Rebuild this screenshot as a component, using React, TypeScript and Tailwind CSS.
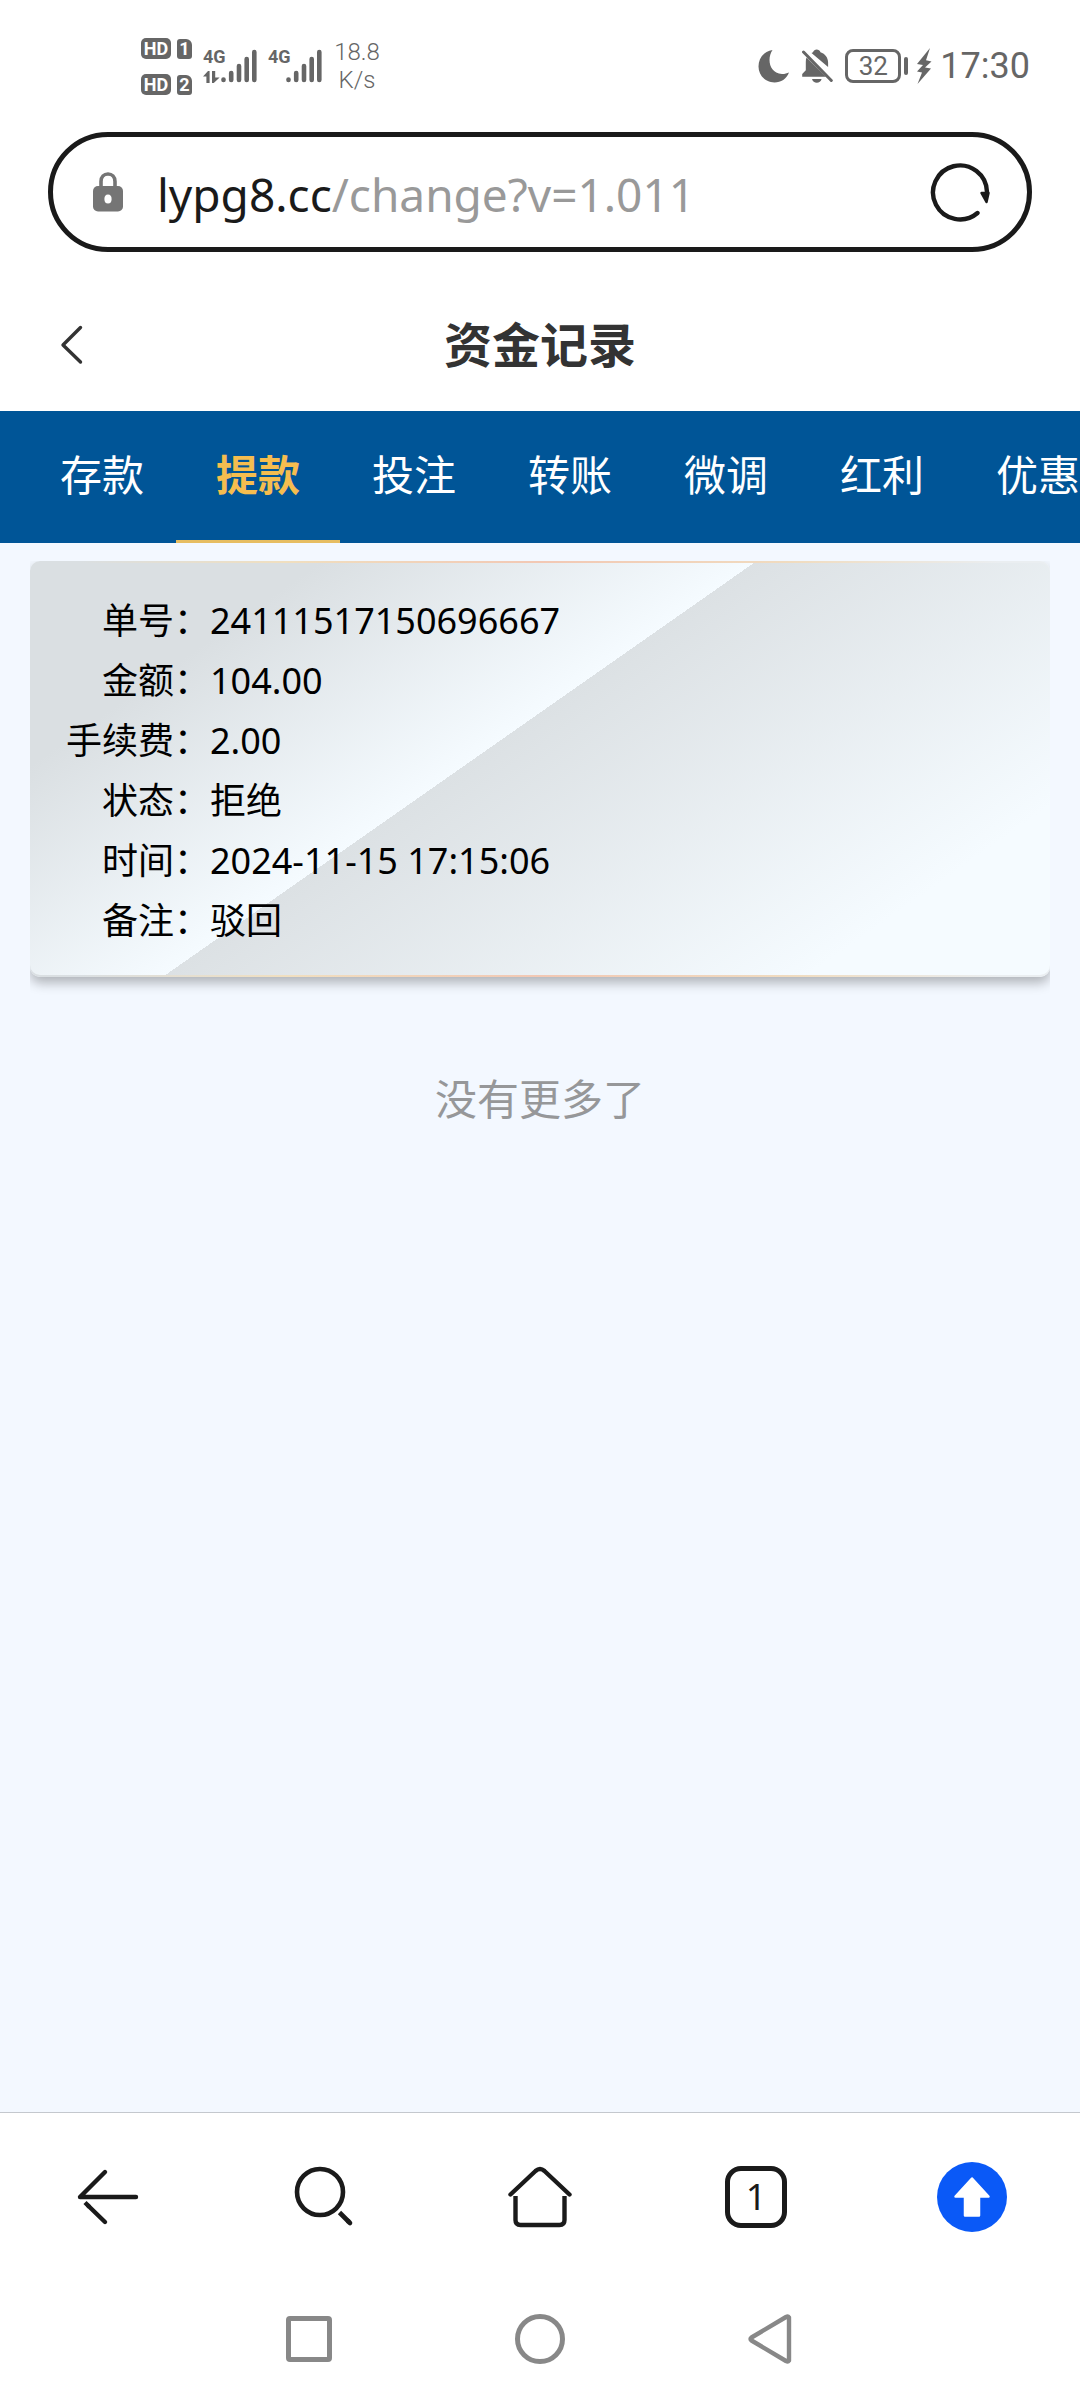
import { useState } from 'react';

const tabs = ['存款', '提款', '投注', '转账', '微调', '红利', '优惠'];

const records = [
    {
        单号: '24111517150696667',
        金额: '104.00',
        手续费: '2.00',
        状态: '拒绝',
        时间: '2024-11-15 17:15:06',
        备注: '驳回',
    },
];

function SignalBars() {
    return (
        <svg width="36" height="34" viewBox="0 0 36 34" stroke="#666666" strokeWidth="4.6" strokeLinecap="round">
            <path d="M2.5 30.5v.5M10.2 24v7M18 17v14M25.7 10v21M33.3 3v28" />
        </svg>
    );
}

function HdBadge({ sim }: { sim: number }) {
    return (
        <div className="flex h-[22px] items-end gap-[6px] text-white">
            <span className="flex h-[21px] w-[30px] items-center justify-center rounded-[5px] bg-[#666666] text-[18px] font-bold leading-none">HD</span>
            <span className="flex h-5 w-[15px] items-center justify-center rounded-[3px] rounded-tr-[6px] bg-[#666666] text-[18px] font-bold leading-none">{sim}</span>
        </div>
    );
}

function StatusBar() {
    return (
        <div className="flex h-[132px] items-center justify-between pl-[141px] pr-[50px] font-['Roboto',sans-serif] text-[#666666]">
            <div className="flex items-center">
                <div className="flex flex-col gap-[14px]">
                    <HdBadge sim={1} />
                    <HdBadge sim={2} />
                </div>
                <div className="ml-[11px] flex">
                    <div className="flex w-[18px] flex-col items-start justify-between">
                        <span className="text-[18px] font-bold leading-4">4G</span>
                        <svg width="17" height="12" viewBox="0 0 17 12" fill="#666666">
                            <path d="M0 5.5 5 0h1.6v12H3.4V5.5ZM9 0h3.2v6.5h4.4L10.8 12H9Z" />
                        </svg>
                    </div>
                    <SignalBars />
                </div>
                <div className="ml-[11px] flex">
                    <span className="w-[18px] text-[18px] font-bold leading-4">4G</span>
                    <SignalBars />
                </div>
                <div className="ml-[11px] w-12 text-center text-[24px] leading-7 font-light">
                    <div>18.8</div>
                    <div>K/s</div>
                </div>
            </div>
            <div className="flex items-center">
                <svg width="31" height="34" viewBox="0 0 31 34" fill="#666666">
                    <path d="M14.5 1C9 9 10.5 24 24 25c3 0 5-.7 7-1.5C28.5 30 23 33.5 16.5 33.5 7.5 33.5.5 26.5.5 17.5.5 9 6.5 1.8 14.5 1Z" />
                </svg>
                <svg className="ml-3" width="32" height="34" viewBox="0 0 32 34" fill="#666666">
                    <path d="M12 3.2C12.7 1.5 14 .5 15.7.5s3.2 1 3.8 2.7c4.7 1.500 7.6 5.500 7.6 10.300v4.500L10.500 4.100Z" />
                    <path d="M5.5 8.5 25 27.7H1.2v-2.6l3.6-3.8V13c0-1.7.2-3.2.7-4.5ZM11 30h9.6c-.7 2.5-2.500 3.800-4.800 3.800S11.700 32.500 11 30Z" />
                    <path d="M2.5 3 30.3 31.5" stroke="#666666" strokeWidth="3" strokeLinecap="round" />
                </svg>
                <div className="ml-3 flex h-[34px] w-[56px] items-center justify-center rounded-lg border-[3px] border-[#666666] text-[26px] leading-none">32</div>
                <div className="ml-[3px] h-[18px] w-1 rounded-full bg-[#666666]" />
                <svg className="ml-2" width="16" height="36" viewBox="0 0 16 36" fill="#666666">
                    <path d="M14 0 1 16l6 1-6 6.5 5 1L1.5 36 15 20.5l-6-1 6.5-6-5.5-1.2Z" />
                </svg>
                <span className="ml-2 text-[36px] leading-none">17:30</span>
            </div>
        </div>
    );
}

function AddressBar() {
    return (
        <div className="mx-12 flex h-[120px] items-center rounded-full border-[5px] border-[#1a1a1a] pl-10 pr-9">
            <svg width="30" height="40" viewBox="0 0 30 40">
                <path d="M8 16V9.5C8 5 11 2 15 2s7 3 7 7.5V16" fill="none" stroke="#757575" strokeWidth="3.6" />
                <rect y="14" width="30" height="25.5" rx="5" fill="#757575" />
                <ellipse cx="15" cy="27" rx="3.6" ry="4.5" fill="#fff" />
            </svg>
            <div className="ml-[34px] flex-1 pt-1 text-[46px] leading-[60px] text-[#999999]">
                <span className="text-[#1a1a1a]">lypg8.cc</span>/change?v=1.011
            </div>
            <button aria-label="刷新">
                <svg width="62" height="62" viewBox="0 0 62 62" fill="none" stroke="#1a1a1a" strokeWidth="4.4" strokeLinecap="round">
                    <path d="M48.5 52A27 27 0 1 1 58 31" />
                    <path d="M52.5 32h7L57.500 41Z" fill="#1a1a1a" strokeWidth="2.5" strokeLinejoin="round" />
                </svg>
            </button>
        </div>
    );
}

function Toolbar() {
    return (
        <div className="grid h-[168px] grid-cols-5 place-items-center text-[#1a1a1a]">
            <button aria-label="后退">
                <svg width="62" height="62" viewBox="0 0 62 62" fill="none" stroke="currentColor" strokeWidth="4.4" strokeLinecap="round">
                    <path d="M59 31H3L28 6" strokeLinejoin="round" />
                    <path d="M28 56 11 39.500" />
                    <path d="M12.500 41 8 36.500" strokeLinecap="butt" />
                </svg>
            </button>
            <button aria-label="搜索">
                <svg width="62" height="62" viewBox="0 0 62 62" fill="none" stroke="currentColor" strokeWidth="4.6">
                    <circle cx="27" cy="26" r="23" />
                    <path d="M46.5 46.5 56 56" />
                    <path d="M55 55l2 2" strokeLinecap="round" />
                </svg>
            </button>
            <button aria-label="主页">
                <svg width="66" height="62" viewBox="0 0 66 62" fill="none" stroke="currentColor" strokeWidth="4.4">
                    <path d="M3.5 28.500 28.500 5Q33 1 37.500 5L62.500 28.500" strokeLinecap="round" />
                    <path d="M8.500 30V54Q8.500 59 13.500 59H52.500Q57.500 59 57.500 54V30" />
                </svg>
            </button>
            <button className="flex size-[62px] items-center justify-center rounded-[16px] border-[5px] border-[#1a1a1a] text-[36px] leading-none">1</button>
            <button aria-label="上传">
                <svg width="70" height="70" viewBox="0 0 70 70">
                    <circle cx="35" cy="35" r="35" fill="#0a59f7" />
                    <path d="M35 16.5 51.5 34.5H42V53.5H28V34.5H18.5Z" fill="#fff" stroke="#fff" strokeWidth="2.5" strokeLinejoin="round" />
                </svg>
            </button>
        </div>
    );
}

function SystemNav() {
    return (
        <div className="grid h-[119px] grid-cols-[231px_231px_231px] place-items-center justify-center pb-1">
            <button aria-label="最近任务" className="size-[46px] rounded-[4px] border-[5px] border-[#888888]" />
            <button aria-label="桌面" className="size-[50px] rounded-full border-[5px] border-[#888888]" />
            <button aria-label="返回">
                <svg width="46" height="50" viewBox="0 0 46 50" fill="none" stroke="#888888" strokeWidth="4.4" strokeLinejoin="round">
                    <path d="M41 3.5V46.5Q40 48 38 47L3.5 26.5Q1.5 25 3.5 23.5L38 3Q40 2 41 3.5Z" />
                </svg>
            </button>
        </div>
    );
}

export default function App() {
    const [active, setActive] = useState('提款');

    return (
        <div lang="zh-CN" className="flex min-h-screen flex-col bg-white font-['Noto_Sans','Noto_Sans_CJK_SC',sans-serif]">
            <StatusBar />
            <AddressBar />

            <header className="grid h-[159px] grid-cols-[1fr_auto_1fr] items-center pt-5">
                <button aria-label="返回" className="justify-self-start pl-[60px]">
                    <svg width="24" height="46" viewBox="0 0 24 46" fill="none" stroke="#333333" strokeWidth="3.4" strokeLinecap="round" strokeLinejoin="round">
                        <path d="M20.5 8.5 3 26 20.5 43" />
                    </svg>
                </button>
                <h1 className="font-['Noto_Sans_CJK_SC',sans-serif] text-[48px] font-bold leading-[64px] text-[#333333]">资金记录</h1>
            </header>

            <nav className="flex h-[132px] overflow-hidden bg-[#005597] pl-5">
                {tabs.map((tab) => (
                    <button
                        key={tab}
                        onClick={() => setActive(tab)}
                        className={`-mr-2 w-[164px] shrink-0 border-b-[3px] pb-[6px] font-['Noto_Sans_CJK_SC',sans-serif] text-[42px] ${tab === active
                            ? 'border-[#e6bd62] font-bold text-[#f5bd4f]'
                            : 'border-transparent text-white'
                            }`}
                    >
                        {tab}
                    </button>
                ))}
            </nav>

            <main className="flex-1 bg-[#f3f8ff] px-[30px] pt-[18px]">
                {records.map((record) => (
                    <div key={record.单号} className="overflow-hidden pb-5">
                        <div className="rounded-[10px] bg-[linear-gradient(90deg,#dadfe2_5%,#f0dfc0_25%,#f2c8b4_50%,#f0dcc0_75%,#eaeef1_95%)] py-[2px] shadow-[0_6px_12px_rgba(0,0,0,0.28)]">
                            <dl className="rounded-[10px] bg-[linear-gradient(145deg,#dadfe2_18%,#f5fbff_45%,#dce1e4_45%,#f5fbff_85%)] pb-[24px] pt-[28px]">
                                {Object.entries(record).map(([label, value]) => (
                                    <div key={label} className="flex text-[36px] leading-[60px] text-black">
                                        <dt className="w-[180px] shrink-0 text-right">{label}：</dt>
                                        <dd>{value}</dd>
                                    </div>
                                ))}
                            </dl>
                        </div>
                    </div>
                ))}
                <p className="mt-[70px] text-center text-[42px] leading-[64px] text-[#969799]">没有更多了</p>
            </main>

            <footer className="border-t border-[#c4c8ce] bg-white">
                <Toolbar />
                <SystemNav />
            </footer>
        </div>
    );
}
